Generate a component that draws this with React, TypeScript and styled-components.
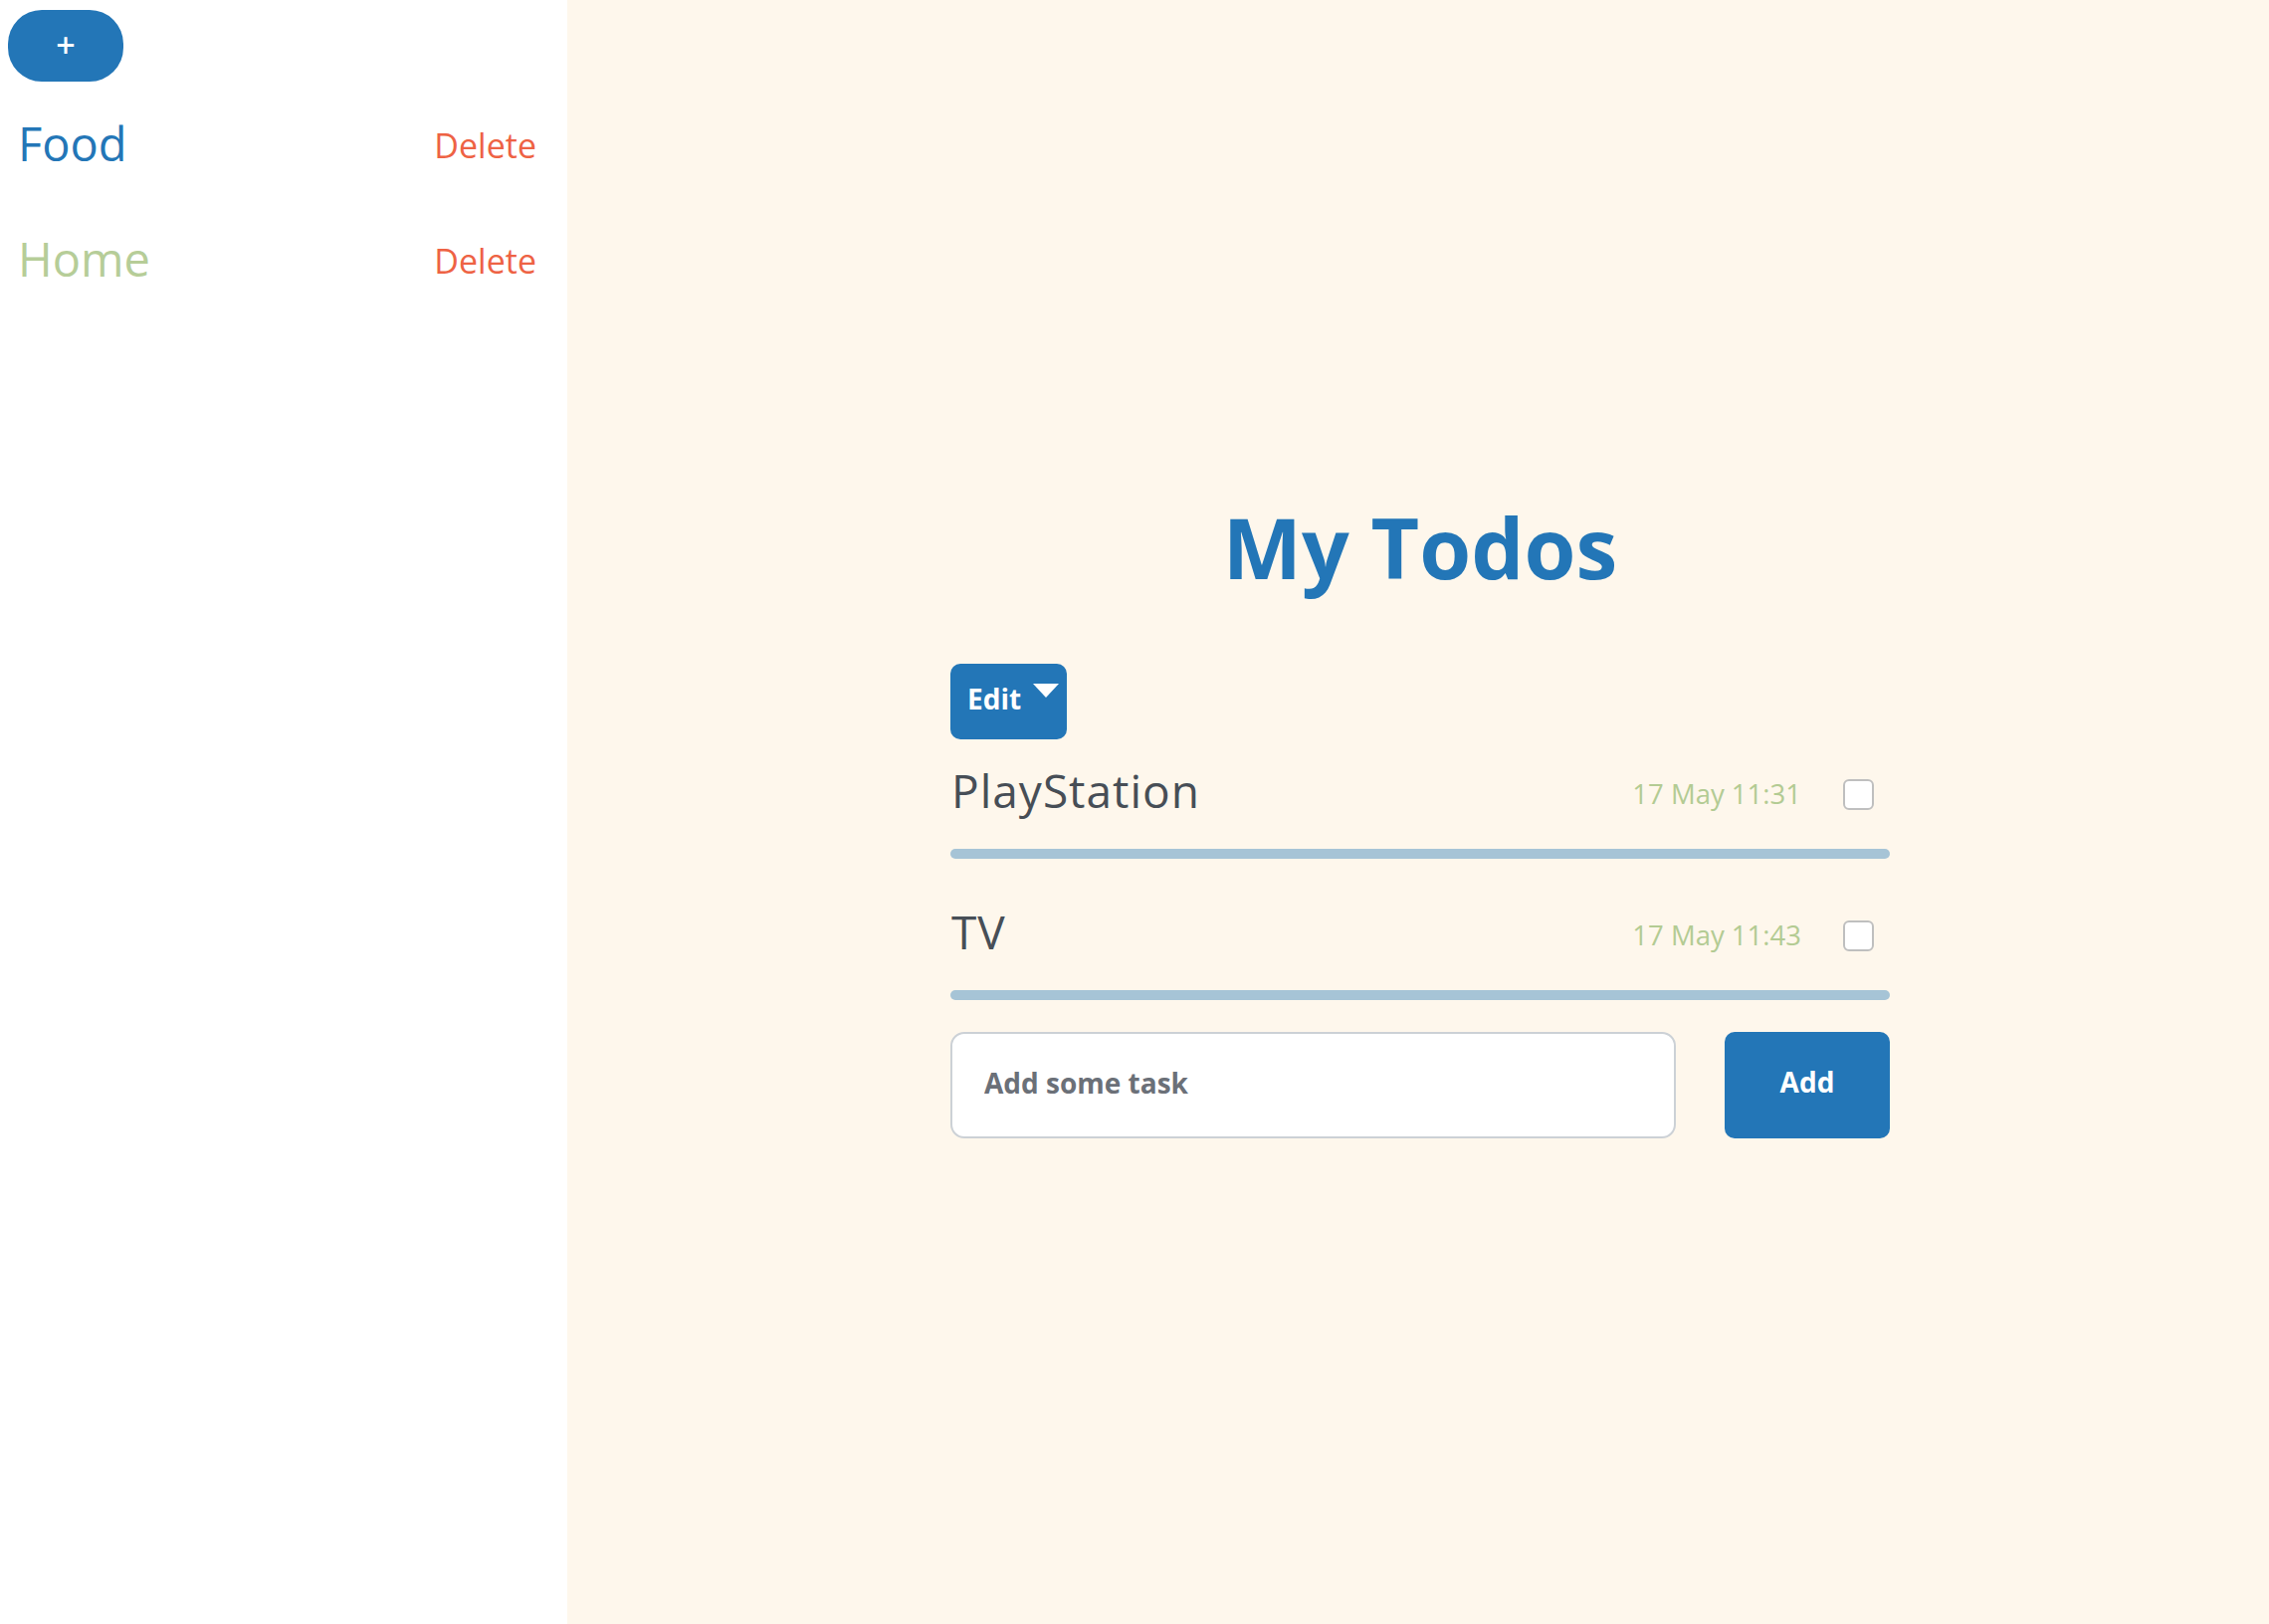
import React from "react";
import styled, { createGlobalStyle } from "styled-components";

const BLUE = "#2376b7";

const GlobalStyle = createGlobalStyle`
  html, body {
    margin: 0;
    padding: 0;
    background: #fef7ec;
  }
  body {
    font-family: "Open Sans", "Noto Sans", Arial, sans-serif;
  }
  * { box-sizing: border-box; }
`;

const Layout = styled.div`
  display: flex;
  width: 2280px;
  height: 1632px;
`;

const Sidebar = styled.aside`
  width: 570px;
  flex: 0 0 570px;
  background: #ffffff;
  padding-top: 10px;
  display: flex;
  flex-direction: column;
`;

const PlusButton = styled.button`
  margin-left: 8px;
  width: 116px;
  height: 72px;
  border: none;
  border-radius: 34px;
  background: ${BLUE};
  color: #ffffff;
  font-family: "Open Sans", sans-serif;
  font-size: 34px;
  font-weight: 600;
  line-height: 1;
  display: flex;
  align-items: center;
  justify-content: center;
  padding: 0 0 2px 0;
  cursor: pointer;
`;

const CategoryList = styled.ul`
  list-style: none;
  margin: 4px 0 0 0;
  padding: 0;
`;

const CategoryItem = styled.li`
  height: 116px;
  display: flex;
  align-items: center;
  justify-content: space-between;
  padding: 0 31px 0 18px;
`;

const CategoryName = styled.span<{ $color: string }>`
  font-size: 47px;
  color: ${(p) => p.$color};
  line-height: 1;
`;

const DeleteLink = styled.span`
  font-size: 34px;
  color: #ee6244;
  line-height: 1;
  padding-top: 4px;
`;

const Main = styled.main`
  flex: 1;
  display: flex;
  justify-content: center;
  padding-top: 500px;
  padding-left: 4px;
`;

const Column = styled.section`
  width: 944px;
  display: flex;
  flex-direction: column;
`;

const Title = styled.h1`
  margin: 0;
  height: 100px;
  line-height: 100px;
  text-align: center;
  font-size: 84px;
  font-weight: 700;
  color: ${BLUE};
`;

const EditButton = styled.button`
  margin-top: 67px;
  width: 117px;
  height: 76px;
  border: none;
  border-radius: 10px;
  background: ${BLUE};
  color: #ffffff;
  font-family: "Open Sans", sans-serif;
  font-weight: 700;
  font-size: 28px;
  display: flex;
  align-items: center;
  padding: 0 8px 6px 17px;
  cursor: pointer;
`;

const Caret = styled.span`
  align-self: flex-start;
  margin-top: 20px;
  margin-left: auto;
  width: 0;
  height: 0;
  border-left: 13.5px solid transparent;
  border-right: 13.5px solid transparent;
  border-top: 14px solid #ffffff;
`;

const TodoList = styled.ul`
  list-style: none;
  margin: 25px 0 0 0;
  padding: 0;
  display: flex;
  flex-direction: column;
  gap: 47px;
`;

const TodoItem = styled.li`
  display: flex;
  flex-direction: column;
  gap: 25px;
`;

const TodoRow = styled.div`
  height: 60px;
  display: flex;
  align-items: center;
  padding-right: 16px;
`;

const TodoLabel = styled.span`
  font-size: 46px;
  letter-spacing: 1px;
  color: #474e56;
  line-height: 1;
  padding-bottom: 8px;
  padding-left: 1px;
`;

const TodoDate = styled.span`
  margin-left: auto;
  font-size: 27.5px;
  color: #b3cb93;
  line-height: 1;
`;

const CheckBox = styled.span`
  margin-left: 42px;
  width: 31px;
  height: 31px;
  border: 2px solid #bfbfbf;
  border-radius: 6px;
  background: #ffffff;
`;

const Divider = styled.div`
  height: 10px;
  border-radius: 5px;
  background: #a6c4d6;
`;

const AddForm = styled.form`
  margin-top: 32px;
  display: flex;
  gap: 49px;
  height: 107px;
`;

const TaskInput = styled.input`
  flex: 1;
  height: 107px;
  border: 2px solid #ccd1d6;
  border-radius: 14px;
  background: #ffffff;
  padding: 0 0 6px 32px;
  font-family: "Open Sans", sans-serif;
  font-size: 28px;
  font-weight: 700;
  color: #474e56;
  outline: none;
  &::placeholder {
    color: #6b7078;
    font-weight: 700;
  }
`;

const AddButton = styled.button`
  width: 166px;
  height: 107px;
  border: none;
  border-radius: 10px;
  background: ${BLUE};
  color: #ffffff;
  font-family: "Open Sans", sans-serif;
  font-size: 28px;
  font-weight: 700;
  cursor: pointer;
  padding: 0 0 8px 0;
`;

const categories = [
  { name: "Food", color: BLUE },
  { name: "Home", color: "#b6cd98" },
];

const todos = [
  { label: "PlayStation", date: "17 May 11:31" },
  { label: "TV", date: "17 May 11:43" },
];

export default function App() {
  return (
    <>
      <GlobalStyle />
      <Layout>
        <Sidebar>
          <PlusButton type="button">+</PlusButton>
          <CategoryList>
            {categories.map((c) => (
              <CategoryItem key={c.name}>
                <CategoryName $color={c.color}>{c.name}</CategoryName>
                <DeleteLink>Delete</DeleteLink>
              </CategoryItem>
            ))}
          </CategoryList>
        </Sidebar>
        <Main>
          <Column>
            <Title>My Todos</Title>
            <EditButton type="button">
              Edit
              <Caret />
            </EditButton>
            <TodoList>
              {todos.map((t) => (
                <TodoItem key={t.label}>
                  <TodoRow>
                    <TodoLabel>{t.label}</TodoLabel>
                    <TodoDate>{t.date}</TodoDate>
                    <CheckBox />
                  </TodoRow>
                  <Divider />
                </TodoItem>
              ))}
            </TodoList>
            <AddForm onSubmit={(e) => e.preventDefault()}>
              <TaskInput placeholder="Add some task" />
              <AddButton type="submit">Add</AddButton>
            </AddForm>
          </Column>
        </Main>
      </Layout>
    </>
  );
}
